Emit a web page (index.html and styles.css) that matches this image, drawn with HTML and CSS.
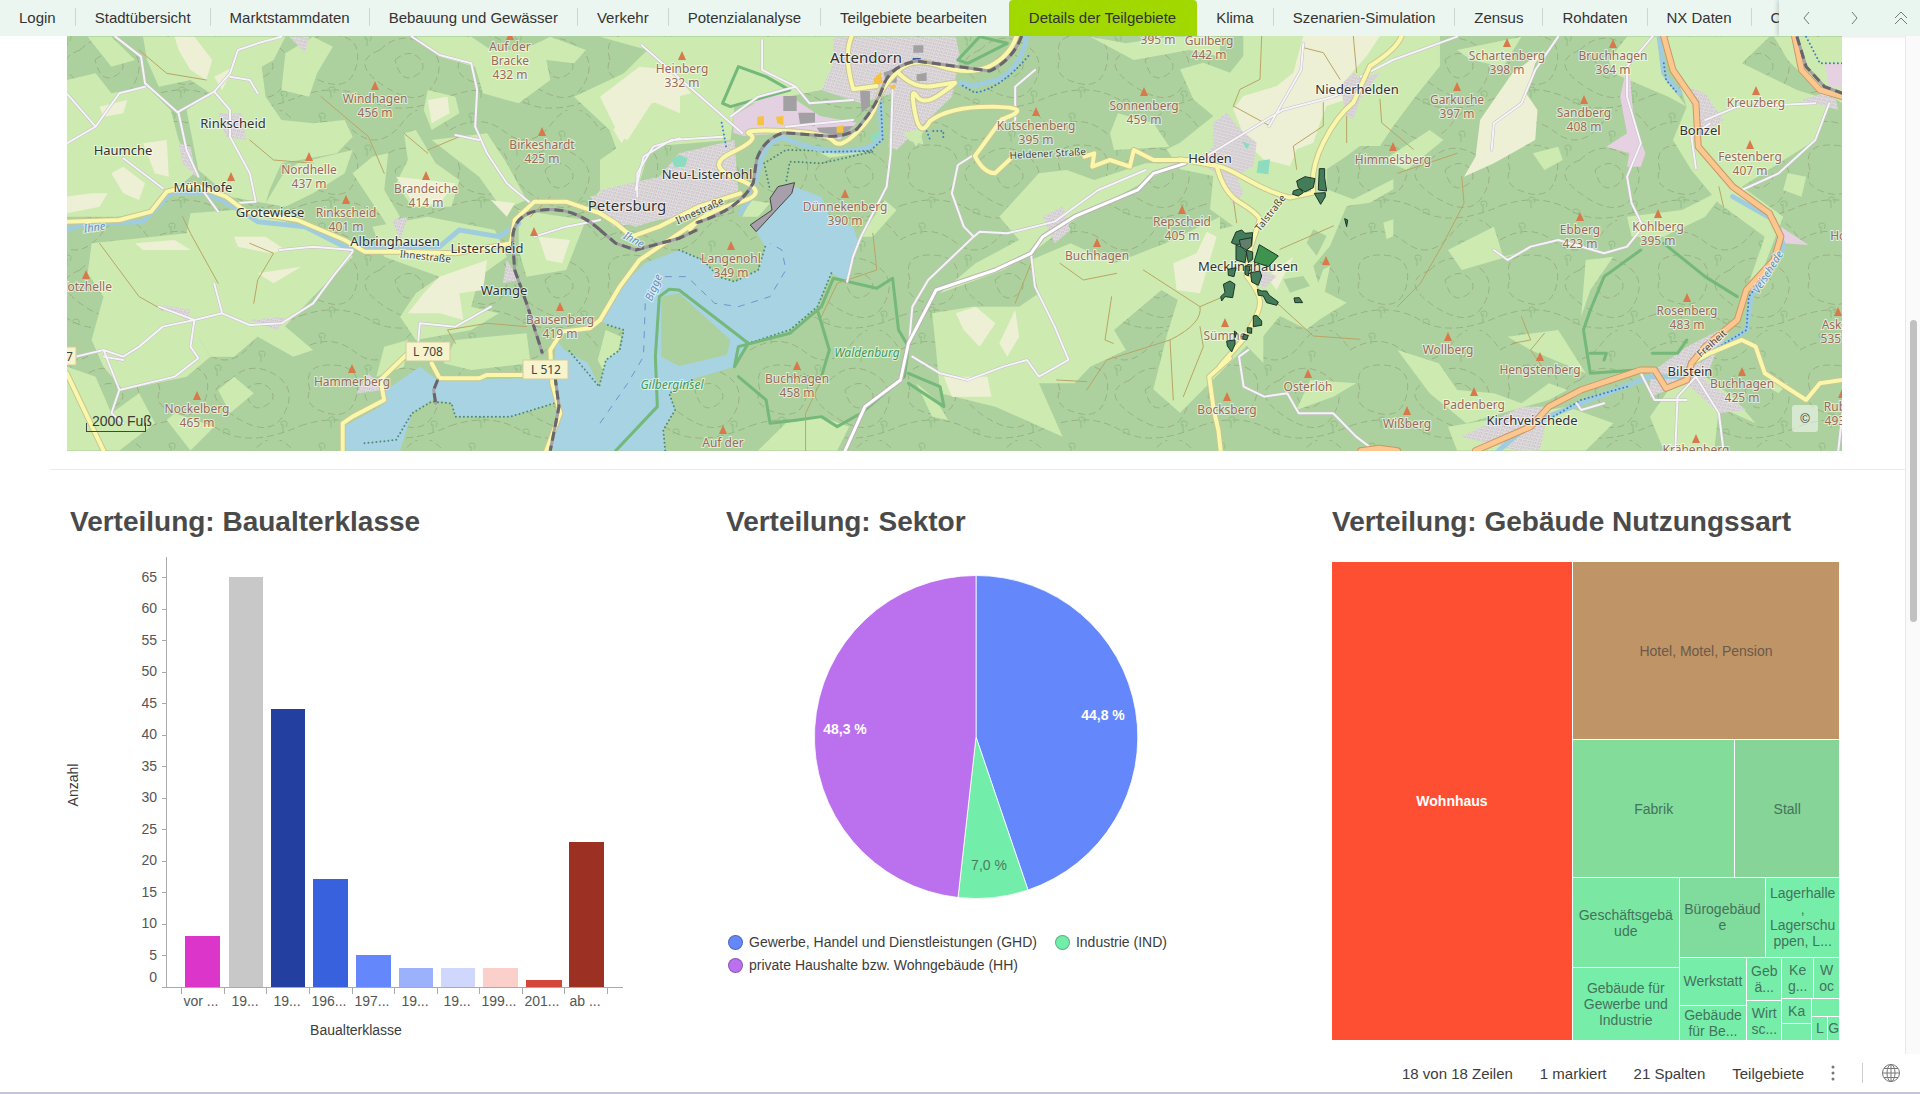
FILE: index.html
```html
<!DOCTYPE html>
<html lang="de">
<head>
    <meta charset="UTF-8">
    <meta name="viewport" content="width=device-width, initial-scale=1.0">
    <title>Details der Teilgebiete</title>
    <link rel="stylesheet" href="styles.css">
</head>
<body>
    <header class="topbar">
        <nav class="tabs">
            <a href="#">Login</a>
            <a href="#">Stadtübersicht</a>
            <a href="#">Marktstammdaten</a>
            <a href="#">Bebauung und Gewässer</a>
            <a href="#">Verkehr</a>
            <a href="#">Potenzialanalyse</a>
            <a href="#">Teilgebiete bearbeiten</a>
            <a href="#" class="active">Details der Teilgebiete</a>
            <a href="#">Klima</a>
            <a href="#">Szenarien-Simulation</a>
            <a href="#">Zensus</a>
            <a href="#">Rohdaten</a>
            <a href="#">NX Daten</a>
            <a href="#">C</a>
        </nav>
        <div class="tab-controls">
            <button type="button" aria-label="Zurück"><svg width="16" height="16"><path d="M10 2 5 8l5 6"/></svg></button>
            <button type="button" aria-label="Weiter"><svg width="16" height="16"><path d="m6 2 5 6-5 6"/></svg></button>
            <button type="button" aria-label="Einklappen"><svg width="16" height="16"><path d="m2 8 6-6 6 6M2 14l6-6 6 6"/></svg></button>
        </div>
    </header>

    <div class="page">
        <main class="content">
            <section class="map">
                <svg viewBox="67 36 1775 415" preserveAspectRatio="xMidYMid slice">
                    <defs>
                        <pattern id="contours" width="150" height="110" patternUnits="userSpaceOnUse">
                            <path class="contour" d="M0 20q30-18 55 2t48-10 47 8M10 60q-8-26 22-25t25 28-30 20-17-23M80 50q20-20 44-6t10 40-50 2-4-36M95 60q14-12 24-2t-4 18-20-16M0 96q40-14 70 4t80-4"/>
                            <path class="tree" d="M20 8q-3-5 2-5t2 6m-3-3v8M110 26q-3-5 2-5t2 6m-3-3v8M66 40q-3-5 2-5t2 6m-3-3v8M30 92q-3-5 2-5t2 6m-3-3v8M132 96q-3-5 2-5t2 6m-3-3v8M74 104q-3-5 2-5t2 6"/>
                        </pattern>
                        <pattern id="houses" width="11" height="10" patternUnits="userSpaceOnUse" patternTransform="rotate(14)">
                            <path d="M0 0h11v10H0z" fill="#dcd8dc"/>
                            <path d="M2 2h3v2H2zM7 3h2v3H7zM2 7h2v2H2zM8 8h3v1H8z" fill="#bbaeae"/>
                            <path d="M0 0h11" stroke="#fafafa"/>
                        </pattern>
                        <path id="peak" d="M-4 4 0-5 4 4z"/>

                        <g id="minor">
                            <g transform="translate(60 30) scale(.3954 .3333)">
                                <path d="M140 20 205 80 215 160 300 250 320 360 350 440M300 245 390 185 430 130 450 60 500 40 560 20M430 140 480 150 500 190M390 185 430 240 430 320 480 430 495 515 440 520M17 340 90 290 150 190 215 170M17 190 90 290M160 385 260 475M360 480 400 545"/>
                                <path d="M740 665 690 740 640 820 560 880 480 885 410 850 340 870 330 950 350 985 290 1040 150 1080 130 1150 160 1180M340 870 260 890 200 950 160 980 110 960 40 980M250 830 340 870M390 760 410 850M110 960 150 1080M160 990 110 980"/>
                                <path d="M890 20 960 75 1040 100 1055 180 1050 290 1080 370 1130 460 1190 520M1000 315 1060 330M905 950 910 880 1000 890 1090 830M555 660 640 650 740 660M1366 570 1280 590 1200 620M1568 325 1500 350 1460 430 1460 500"/>
                            </g>
                            <g transform="translate(600 30) scale(.3954 .3333)">
                                <path d="M740 180 735 370 725 470 660 620 640 680 625 755M945 375 905 405 890 490 920 590 945 620 830 750 790 830 780 960M945 620 960 605 1030 610 1150 575 1260 480 1380 420"/>
                                <path d="M1090 670 1100 770 1150 890 1185 990 1110 1040 1080 990 1020 1010 930 1050 860 1030 790 980M105 45 360 310M410 30 410 120 495 170 530 220 640 210M1050 270 1050 170 1100 120M90 480 110 380 180 330 310 320M495 170 400 200 330 260M470 290 640 270"/>
                            </g>
                            <g transform="translate(1200 30) scale(.4592 .3333)">
                                <path d="M0 390 60 340 180 240 290 200 340 170M150 290 220 120 225 40M350 140 420 90 560 20M780 20 730 120 700 220 640 280 635 360M985 20 930 110 930 200 960 340 930 440 940 520 965 590 930 650 880 670 780 630 720 650 670 690 640 660"/>
                                <path d="M1370 220 1340 330 1260 430 1180 480M1100 270 1170 230 1340 220M105 960 85 980 95 1070 140 1100 190 1090 215 1150 290 1150 340 1220 380 1262M1080 1040 1040 1100 1035 1262M1080 1040 1130 1150 1140 1262M960 1030 990 1110 1060 1110M1399 1150 1390 1262M820 1120 830 1140 880 1120M1080 415 1070 320 1110 280"/>
                            </g>
                        </g>
                        <g id="yellow">
                            <g transform="translate(60 30) scale(.3954 .3333)">
                                <path d="M17 575 150 570 230 545 270 485 340 465 420 500 470 545 600 570 720 630 770 665 860 665 1000 670 1140 640 1150 570 1200 515 1280 515 1366 550"/>
                                <path d="M1366 870 1340 895 1270 905 1240 960 1245 1060 1265 1150 1230 1262M1200 1035 1080 1035 1060 1045 960 1045 940 1000M880 970 810 1050 820 1110 740 1160 715 1180 715 1262M17 1030 110 1262"/>
                            </g>
                            <g transform="translate(700 36) scale(.3333)">
                                <path d="M950 0Q930 60 870 90T720 90 590 110Q540 160 530 200T470 290 400 315 250 285 150 295 95 350 115 430 115 500-30 580"/>
                                <path d="M590 105Q640 160 700 150T765 140 720 175 650 180 645 230 690 255Q750 210 880 212T905 250L825 360Q850 410 885 412L930 370M455 0Q430 60 460 160L530 150"/>
                            </g>
                            <g transform="translate(600 30) scale(.3954 .3333)">
                                <path d="M275 550 150 650 100 690 50 770 0 870M355 490 250 530 150 590 80 620 40 580 0 550M1225 380 1250 370 1245 410 1290 390 1340 410 1350 360 1400 390 1500 390"/>
                            </g>
                            <g transform="translate(1180 36) scale(.3333)">
                                <path d="M665 0Q650 40 570 90L520 200Q470 240 430 320T400 470L330 485Q270 470 200 430T110 390L0 370M110 390Q130 470 180 500T240 550L210 640 200 720Q240 770 240 800T190 910L120 990"/>
                            </g>
                            <g transform="translate(1200 30) scale(.4592 .3333)">
                                <path d="M65 985 20 1040 30 1140 40 1200 45 1262M1070 1000 1110 970 1180 930 1210 950 1230 1030 1320 1110 1350 1060 1399 1050"/>
                            </g>
                        </g>
                        <g id="orange" transform="translate(1200 30) scale(.4592 .3333)">
                            <path d="M1010 20 1030 120 1080 220 1085 350 1160 470 1240 550 1265 620 1250 690 1190 780 1170 870 1100 950 1070 1000 1060 1050 1015 1075 990 1020 960 1020 830 1080 760 1130 720 1190 600 1262M1295 20 1310 120 1350 180 1399 200M350 1262 390 1255 430 1262"/>
                        </g>
                        <path id="county" transform="translate(600 30) scale(.3954 .3333)" d="M620 1262 670 1130 760 1050 780 940 850 780 1000 720 1090 670 1120 620 1200 560 1360 480 1400 430 1480 400"/>
                        <g id="rail">
                            <path transform="translate(60 30) scale(.3954 .3333)" d="M1366 600Q1300 530 1220 540T1145 640L1150 720 1180 820 1220 970M1252 1040 1262 1130 1240 1262M955 1050 945 1080 950 1120"/>
                            <path transform="translate(700 36) scale(.3333)" d="M965 0Q940 70 870 105L650 75Q570 90 550 150T470 280Q430 305 380 300L250 290Q190 310 170 370L160 440Q120 520-10 560"/>
                            <path transform="translate(600 30) scale(.3954 .3333)" d="M245 600 200 625 90 660 40 640 0 600"/>
                            <path transform="translate(1200 30) scale(.4592 .3333)" d="M1300 20 1320 110 1360 170 1399 190"/>
                        </g>
                    </defs>

                    <rect class="forest" x="67" y="36" width="1775" height="415"/>
                    <rect x="67" y="36" width="1775" height="415" fill="url(#contours)"/>

                    <g class="meadow">
                        <g transform="translate(60 30) scale(.3954 .3333)">
                            <path d="M17 150 90 130 130 190 220 170 280 240 300 330 340 430 300 470 230 540 150 560 17 560z"/>
                            <path d="M70 20 130 20 190 90 130 110zM210 20 570 20 540 90 510 110 520 200 560 270 640 280 720 270 740 320 700 370 560 400 530 480 520 520 430 500 350 420 330 300 320 240 380 190 330 150 250 170 220 90z"/>
                            <path d="M570 70 640 20 690 50 650 130 630 200 560 180zM600 400 740 360 720 430 640 490 570 530 520 520 560 440z"/>
                            <path d="M870 310 900 300 950 400 1010 450 990 530 890 530 850 460 880 390zM790 380 830 370 820 480 860 560 830 590 740 430z"/>
                            <path d="M960 20 1040 20 1090 60 1170 60 1240 20 1330 60 1300 100 1230 90 1240 150 1160 220 1070 190 1050 110 960 80 900 20z"/>
                            <path d="M1300 200 1480 100 1568 60 1568 320 1490 360 1450 520 1340 520 1420 400 1390 300z"/>
                            <path d="M930 180 1000 200 1010 250 940 300 920 240zM940 330 1080 310 1130 400 1180 510 1120 540 1060 440z"/>
                            <path d="M80 640 320 610 330 550 440 540 560 570 720 640 740 680 640 800 560 900 430 900 350 920 380 980 320 1040 160 1080 110 1010 80 930 110 800 70 730z"/>
                            <path d="M330 880 420 860 560 880 640 960 590 980 500 920 440 980 380 980zM790 590 930 560 1100 600 1130 680 1060 740 1040 830 1110 850 1040 900 900 930 860 860 900 790 960 740 820 680z"/>
                            <path d="M1160 540 1330 570 1280 720 1180 740 1160 660zM820 950 880 930 870 1010 800 1040zM1000 930 1180 910 1190 1000 1040 1020 970 1000z"/>
                            <path d="M17 1010 90 1040 130 1150 200 1090 240 1180 150 1262 17 1262zM290 1150 390 1190 330 1262 270 1170zM440 1040 490 1090 430 1150 400 1080z"/>
                            <path d="M1380 900 1420 920 1390 1060 1360 990z"/>
                        </g>
                        <g transform="translate(600 30) scale(.3954 .3333)">
                            <path d="M0 20 640 20 620 130 560 180 340 230 330 330 120 350 0 520 0 390 60 340 0 200 120 60z"/>
                            <path d="M380 510 430 520 400 560 360 560zM720 510 750 540 690 620 660 620z"/>
                            <path d="M1110 430 1180 420 1250 450 1380 400 1480 400 1400 440 1200 570 1080 680 1020 720 860 790 950 700 1060 630 1010 560z"/>
                            <path d="M1090 690 1190 640 1300 700 1430 640 1568 560 1568 820 1490 830 1420 780 1300 900 1330 960 1240 1010 1200 1060 1110 1060 1170 1220 1000 1130 860 1090 850 960 840 850 940 830 1060 830 1110 790z"/>
                            <path d="M1310 250 1400 280 1440 350 1300 360 1290 310zM1240 20 1330 40 1440 20 1568 20 1568 80 1490 60 1350 90zM760 280 820 300 800 350zM800 1060 840 1160 880 1170 850 1110zM560 1160 630 1190 600 1262 400 1262 470 1180z"/>
                        </g>
                        <g transform="translate(1180 36) scale(.3333)">
                            <path d="M190 0 780 0 780 90 700 190 640 270 600 330 540 330 500 360 440 400 440 460 520 490 640 430 640 460 570 500 500 510 450 630 400 690 420 760 500 800 420 850 380 880 300 840 250 900 250 980 200 930 0 1130-80 1060-40 900 0 770-30 700 70 590 160 570 90 520 100 420 0 400-40 340 0 320 100 240 40 190 0 100 70 80 150 110 190 60z"/>
                            <path d="M610 560 640 550 640 600 620 610zM430 700 450 690 430 790 400 780z"/>
                            <path class="forest" d="M310 730 370 720 390 750 330 770zM400 580 440 600 410 660 380 620z"/>
                        </g>
                        <g transform="translate(1200 30) scale(.4592 .3333)">
                            <path d="M500 300 530 330 450 420 400 390zM540 660 640 590 660 680 720 660 570 720zM725 370 780 350 790 390 750 420zM930 20 1000 20 1010 140 1060 230 1020 200 900 130 890 90zM560 60 700 20 660 110 590 90z"/>
                            <path d="M1010 20 1240 20 1180 100 1300 180 1370 210 1340 330 1180 470 1270 560 1220 740 1190 780 1230 620 1130 520 1070 420 1030 330 1060 230z"/>
                            <path d="M1150 470 1100 560 1010 620 940 620 930 560 1050 540zM840 690 900 680 850 780 830 860zM670 920 780 900 840 1030 720 960zM430 960 520 1000 560 1080 640 1090 700 1120 760 1060 800 1080 760 1110 580 1180 500 1090zM240 1050 340 1060 290 1100 210 1140z"/>
                            <path d="M1040 1040 980 1160 1010 1262 1120 1262 1130 1130 1210 1180 1160 1100 1100 1040zM540 1190 800 1130 900 1180 840 1262 560 1262zM1280 430 1320 440 1310 500 1270 480zM1210 1050 1280 1060 1260 1090zM1250 20 1399 20 1399 220 1330 160 1280 90z"/>
                        </g>
                    </g>

                    <g class="field">
                        <g transform="translate(60 30) scale(.3954 .3333)">
                            <path d="M290 20 340 20 385 90 370 150 330 120 300 60zM210 340 270 330 275 440 240 430zM390 140 440 110 410 180zM100 230 170 210 160 250 110 260zM130 430 160 410 215 460 200 510 160 490zM17 500 80 490 120 490 100 530 17 550z"/>
                            <path d="M440 620 520 620 570 660 530 670 450 650zM190 640 290 630 330 660 210 660zM960 740 1080 690 1070 780 1010 790 1020 870 960 850 880 850 920 790zM1210 620 1290 630 1270 700 1230 690zM850 440 1000 460 960 520 900 530zM930 210 980 200 985 250 940 280zM1400 300 1450 180 1520 120 1568 190 1568 250 1490 210 1420 340z"/>
                            <path d="M500 730 610 710 540 760zM1090 510 1150 520 1130 560z"/>
                        </g>
                        <g transform="translate(600 30) scale(.3954 .3333)">
                            <path d="M50 320 0 200 100 110 180 120 230 190 130 220 70 330zM900 850 950 830 1000 880 960 950 920 900zM1010 940 1050 840 1060 920 1030 980zM870 1040 980 1040 990 1100 890 1100z"/>
                        </g>
                        <g transform="translate(940 200) scale(.3333)">
                            <path d="M700 190 770 160 800 95 830 110 780 280 710 270zM980 230 1060 170 1010 270z"/>
                        </g>
                        <g transform="translate(1180 36) scale(.3333)">
                            <path d="M370 0 600 0 560 60 490 140 500 190 440 210 420 260 400 320 350 340 330 390 250 370 200 320 160 220 190 180 290 150 340 110z"/>
                        </g>
                        <g transform="translate(1200 30) scale(.4592 .3333)">
                            <path d="M750 60 680 130 610 270 600 380 575 440 640 400 730 330 735 240 710 190 730 100z"/>
                        </g>
                    </g>

                    <path class="mauve" transform="translate(1200 30) scale(.4592 .3333)" d="M930 110 915 200 930 310 885 350 935 370 930 410 960 410 970 370 945 280 935 110zM1265 590 1325 645 1270 640zM1360 100 1399 100 1399 170 1370 170z"/>
                    <g fill="url(#houses)">
                        <g transform="translate(600 30) scale(.3954 .3333)">
                            <path d="M590 20 900 20 910 80 890 200 820 280 750 360 730 350 740 190 660 220 560 180 590 100zM0 480 150 440 200 370 340 330 350 490 250 530 90 590 20 560zM1120 560 1170 530 1190 600 1150 640z"/>
                        </g>
                        <g transform="translate(1180 36) scale(.3333)">
                            <path d="M100 260 140 230 180 280 230 320 220 390 170 420 190 470 160 510 120 420 60 380 100 330zM480 150 520 110 545 130 600 110 540 190 520 250 500 240zM210 690 290 720 250 760z"/>
                        </g>
                        <g transform="translate(1200 30) scale(.4592 .3333)">
                            <path d="M1060 170 1100 190 1140 270 1090 320zM1310 210 1380 180 1390 240zM1060 950 1160 880 1120 980 1100 1050 1190 1140 1130 1150 1060 1060 980 1100 980 1030zM570 1220 700 1130 760 1130 740 1262 690 1262z"/>
                        </g>
                        <g transform="translate(60 30) scale(.3954 .3333)">
                            <path d="M400 250 460 250 470 330 420 320zM300 340 330 350 345 440 310 400zM840 570 880 560 860 630zM1130 690 1160 750 1120 760zM780 1030 820 1080 750 1090zM1340 500 1490 450 1568 470 1568 560 1400 590zM580 20 630 20 620 70zM260 825 330 840 320 870zM480 870 570 860 550 900z"/>
                        </g>
                    </g>
                    <g transform="translate(700 36) scale(.3333)">
                        <path fill="#e3d0e0" d="M100 240 200 180 270 180 360 240 470 260 420 310 270 290 130 300 100 290z"/>
                        <path fill="#a3a0a3" d="M250 180 290 180 290 225 250 225zM295 230 345 230 345 270 300 265zM480 165 510 165 510 210 485 230zM550 110 590 95 590 140 560 140zM650 115 680 110 680 135 650 135zM640 28 670 28 670 50 640 50zM350 275 460 270 430 300 360 290z"/>
                        <path fill="#3558a0" d="M638 66 662 66 662 84 638 84z"/>
                        <path fill="#f5c242" d="M172 242 192 240 192 268 172 268zM228 242 250 240 250 268 232 262zM410 272 430 268 430 290 410 290zM520 130 542 108 548 140 525 150zM568 150 588 145 580 168z"/>
                        <path fill="#8edcc0" d="M510 300 550 280 550 310 520 325z"/>
                        <path class="meadow" d="M610 290 660 280 670 325 630 315zM360 350 520 345 390 365z"/>
                    </g>
                    <path fill="#8edcc0" transform="translate(600 30) scale(.3954 .3333)" d="M180 390 200 375 222 385 215 410 190 412z"/>
                    <path fill="#8edcc0" transform="translate(1180 36) scale(.3333)" d="M235 375 270 370 265 415 230 410zM185 315 210 325 200 340z"/>

                    <!-- Biggesee -->
                    <g class="water">
                        <path transform="translate(60 30) scale(.3954 .3333)" d="M720 1262 715 1190 810 1130 825 1080 910 1010 955 1050 1180 1045 1245 1040 1250 1120 1140 1160 1000 1160 990 1120 940 1110 890 1150 860 1262z"/>
                        <path transform="translate(600 30) scale(.3954 .3333)" d="M-125 1262-102 1150-120 1040-110 930-90 960-30 1000-2 1070 15 990 50 960 60 900 20 885 0 870 50 770 114 700 200 660 260 690 300 740 340 755 400 720 418 650 395 605 490 470 560 500 585 570 640 590 655 640 625 755 585 730 550 830 480 900 375 940 340 1010 240 1045 175 1090 190 1140 160 1200 165 1262z"/>
                    </g>
                    <g transform="translate(600 30) scale(.3954 .3333)">
                        <path class="forest" d="M155 800 200 790 330 930 320 975 200 1008 155 980z"/>
                        <path class="dam" d="M380 585 435 540 430 505 450 470 492 458 485 490 395 605z"/>
                        <path class="ferry" d="M0 1180 70 1060 110 980 115 800 160 740 220 740 290 820 350 830 430 800 470 720 460 660 430 640"/>
                        <path class="dotted" d="M200 660 260 690 300 740 340 755 400 720 418 650M585 730 550 830 480 900 375 940M20 885 60 900 50 960 15 990-2 1070-80 960M165 1262 160 1200 190 1140 175 1090 240 1045M415 400 470 360 690 365 560 400 480 395 470 460M415 400 430 480"/>
                        <path class="reserve" d="M40 1262 145 1130 140 980 150 800 175 778 200 780 375 940 340 1010 350 950 480 910 560 830 590 745 700 775 740 745 755 900 780 950 770 1040 660 1150 600 1190 560 1160 500 1170 430 1180 420 1110 350 1040M550 840 580 960 560 1040 480 1040M780 1030 860 1070 870 1130 780 1060M310 220 350 110 420 140 480 180 330 230zM905 90 960 20 1030 40 930 100z"/>
                    </g>
                    <path class="reserve" transform="translate(1200 30) scale(.4592 .3333)" d="M1010 640 1100 740 1170 800M960 660 880 740 850 840 835 900 850 1030 950 1020M850 970 885 970 880 990M985 970 1040 970 1060 930"/>
                    <path class="dotted" transform="translate(60 30) scale(.3954 .3333)" d="M770 1240 850 1230 890 1150 940 1115 990 1120 1000 1160 1140 1160 1250 1120"/>

                    <g class="river">
                        <path transform="translate(60 30) scale(.3954 .3333)" d="M17 600 70 580 210 575 280 490 370 490 440 530 500 575 620 590 720 650 960 650 1010 600 1110 620 1160 580"/>
                        <path transform="translate(700 36) scale(.3333)" d="M980 0Q970 80 900 130L820 150 780 140M540 190 545 300Q530 340 440 345T250 305Q190 320 180 390L150 490 120 530"/>
                        <path transform="translate(1200 30) scale(.4592 .3333)" d="M1000 20 1010 130 1045 190M1160 500 1250 570 1272 650 1200 800 1190 900 1090 990M1070 1040 980 1040 830 1120 720 1180 650 1262"/>
                    </g>
                    <path class="dotted blue" transform="translate(1200 30) scale(.4592 .3333)" d="M1010 100 1015 150 1040 190M1240 720 1195 800 1190 900 1085 990M930 1070 830 1110 770 1160M1320 20 1350 100 1399 100"/>
                    <path class="dotted blue" transform="translate(700 36) scale(.3333)" d="M985 60Q900 160 825 170L780 145M542 190 548 310 510 345 360 348M65 260 80 340M680 285 690 310M700 285 730 285 730 305"/>

                    <g class="track">
                        <path transform="translate(60 30) scale(.3954 .3333)" d="M370 150 270 130 200 60M480 330 540 390 640 400M660 200 720 260 780 320 820 430M400 760 330 610 310 560M490 820 500 750 540 670 480 640M930 360 1010 320M870 310 910 350 930 370M1190 560 1240 500M100 640 200 800 260 840M1000 940 980 900 1080 880 1180 890"/>
                        <path transform="translate(600 30) scale(.3954 .3333)" d="M690 610 700 720 600 760 560 860M520 1262 520 1150 560 1050M1090 700 1050 820"/>
                        <path transform="translate(940 200) scale(.3333)" d="M610 210 780 320 850 290M780 320Q790 370 690 420L500 480 440 570M350 540 440 545M515 290 495 420 520 430M690 420 700 600M360 190 430 240 530 220M780 380 790 440 730 590"/>
                        <path transform="translate(1180 36) scale(.3333)" d="M370 35 430 50 480 130M520 0 530 110M160 210 270 270M245 0 240 130 180 160 160 210M430 200 430 270 340 330 350 400M170 560 160 490M290 800 400 900 540 910M300 640 460 570M600 190 605 260 700 340M500 320 500 240"/>
                        <path transform="translate(1200 30) scale(.4592 .3333)" d="M570 440 575 520 530 640 480 760 430 830M700 860 720 930 680 940M760 1040 720 960 750 910M430 430 560 370M1130 470 1140 530"/>
                    </g>

                    <use href="#minor" class="casing minor-casing"/>
                    <use href="#minor" class="minor"/>
                    <use href="#county" class="casing county-casing"/>
                    <use href="#county" class="county"/>
                    <use href="#yellow" class="casing yellow-casing"/>
                    <use href="#yellow" class="yellow"/>
                    <use href="#orange" class="casing orange-casing"/>
                    <use href="#orange" class="orange"/>
                    <use href="#rail" class="rail-bed"/>
                    <use href="#rail" class="rail"/>

                    <g class="peaks">
                        <g transform="translate(510 36)"><use href="#peak"/><text y="15">Auf der<tspan x="0" dy="14">Bracke</tspan><tspan x="0" dy="14">432 m</tspan></text></g>
                        <g transform="translate(375 86)"><use href="#peak"/><text y="17">Windhagen<tspan x="0" dy="14">456 m</tspan></text></g>
                        <g transform="translate(309 157)"><use href="#peak"/><text y="17">Nordhelle<tspan x="0" dy="14">437 m</tspan></text></g>
                        <g transform="translate(542 132)"><use href="#peak"/><text y="17">Birkeshardt<tspan x="0" dy="14">425 m</tspan></text></g>
                        <g transform="translate(426 176)"><use href="#peak"/><text y="17">Brandeiche<tspan x="0" dy="14">414 m</tspan></text></g>
                        <g transform="translate(346 200)"><use href="#peak"/><text y="17">Rinkscheid<tspan x="0" dy="14">401 m</tspan></text></g>
                        <g transform="translate(86 275)"><use href="#peak"/><text y="16">Kotzhelle</text></g>
                        <g transform="translate(560 307)"><use href="#peak"/><text y="17">Bausenberg<tspan x="0" dy="14">419 m</tspan></text></g>
                        <g transform="translate(352 369)"><use href="#peak"/><text y="17">Hammerberg</text></g>
                        <g transform="translate(197 396)"><use href="#peak"/><text y="17">Nockelberg<tspan x="0" dy="14">465 m</tspan></text></g>
                        <g transform="translate(231 177)"><use href="#peak"/></g>
                        <g transform="translate(534 232)"><use href="#peak"/></g>
                        <g transform="translate(682 56)"><use href="#peak"/><text y="17">Heinberg<tspan x="0" dy="14">332 m</tspan></text></g>
                        <g transform="translate(1144 92)"><use href="#peak"/><text y="18">Sonnenberg<tspan x="0" dy="14">459 m</tspan></text></g>
                        <g transform="translate(1036 112)"><use href="#peak"/><text y="18">Kutschenberg<tspan x="0" dy="14">395 m</tspan></text></g>
                        <g transform="translate(845 194)"><use href="#peak"/><text y="17">Dünnekenberg<tspan x="0" dy="14">390 m</tspan></text></g>
                        <g transform="translate(731 246)"><use href="#peak"/><text y="17">Langenohl<tspan x="0" dy="14">349 m</tspan></text></g>
                        <g transform="translate(1097 243)"><use href="#peak"/><text y="17">Buchhagen</text></g>
                        <g transform="translate(1182 210)"><use href="#peak"/><text y="16">Repscheid<tspan x="0" dy="14">405 m</tspan></text></g>
                        <g transform="translate(797 366)"><use href="#peak"/><text y="17">Buchhagen<tspan x="0" dy="14">458 m</tspan></text></g>
                        <g transform="translate(723 430)"><use href="#peak"/><text y="17">Auf der</text></g>
                        <g transform="translate(1209 28)"><text y="17">Guilberg<tspan x="0" dy="14">442 m</tspan></text></g>
                        <g transform="translate(1158 28)"><text y="16">395 m</text></g>
                        <g transform="translate(1507 43)"><use href="#peak"/><text y="17">Schartenberg<tspan x="0" dy="14">398 m</tspan></text></g>
                        <g transform="translate(1613 44)"><use href="#peak"/><text y="16">Bruchhagen<tspan x="0" dy="14">364 m</tspan></text></g>
                        <g transform="translate(1457 87)"><use href="#peak"/><text y="17">Garkuche<tspan x="0" dy="14">397 m</tspan></text></g>
                        <g transform="translate(1584 100)"><use href="#peak"/><text y="17">Sandberg<tspan x="0" dy="14">408 m</tspan></text></g>
                        <g transform="translate(1756 91)"><use href="#peak"/><text y="16">Kreuzberg</text></g>
                        <g transform="translate(1393 147)"><use href="#peak"/><text y="17">Himmelsberg</text></g>
                        <g transform="translate(1750 145)"><use href="#peak"/><text y="16">Festenberg<tspan x="0" dy="14">407 m</tspan></text></g>
                        <g transform="translate(1580 217)"><use href="#peak"/><text y="17">Ebberg<tspan x="0" dy="14">423 m</tspan></text></g>
                        <g transform="translate(1658 214)"><use href="#peak"/><text y="17">Kohlberg<tspan x="0" dy="14">395 m</tspan></text></g>
                        <g transform="translate(1687 298)"><use href="#peak"/><text y="17">Rosenberg<tspan x="0" dy="14">483 m</tspan></text></g>
                        <g transform="translate(1448 337)"><use href="#peak"/><text y="17">Wollberg</text></g>
                        <g transform="translate(1540 357)"><use href="#peak"/><text y="17">Hengstenberg</text></g>
                        <g transform="translate(1474 392)"><use href="#peak"/><text y="17">Padenberg</text></g>
                        <g transform="translate(1407 411)"><use href="#peak"/><text y="17">Wißberg</text></g>
                        <g transform="translate(1308 374)"><use href="#peak"/><text y="17">Osterlöh</text></g>
                        <g transform="translate(1225 323)"><use href="#peak"/><text y="17">Sümme</text></g>
                        <g transform="translate(1227 397)"><use href="#peak"/><text y="17">Bocksberg</text></g>
                        <g transform="translate(1742 372)"><use href="#peak"/><text y="16">Buchhagen<tspan x="0" dy="14">425 m</tspan></text></g>
                        <g transform="translate(1696 439)"><use href="#peak"/><text y="15">Krähenberg</text></g>
                        <g transform="translate(1838 312)"><use href="#peak"/><text y="17">Askay<tspan x="0" dy="14">535 m</tspan></text></g>
                        <g transform="translate(1842 394)"><use href="#peak"/><text y="17">Ruben<tspan x="0" dy="14">493 m</tspan></text></g>
                        <g transform="translate(1842 223)"><text y="17">Hoh</text></g>
                        <g transform="translate(1326 261)"><use href="#peak"/></g>
                    </g>

                    <g class="villages">
                        <text x="233" y="128">Rinkscheid</text>
                        <text x="123" y="155">Haumche</text>
                        <text x="203" y="192">Mühlhofe</text>
                        <text x="270" y="217">Grotewiese</text>
                        <text x="395" y="246">Albringhausen</text>
                        <text x="487" y="253">Listerscheid</text>
                        <text x="504" y="295">Wamge</text>
                        <text x="707" y="179">Neu-Listernohl</text>
                        <text x="1210" y="163">Helden</text>
                        <text x="1248" y="271">Mecklinghausen</text>
                        <text x="1357" y="94">Niederhelden</text>
                        <text x="1700" y="135">Bonzel</text>
                        <text x="1532" y="425">Kirchveischede</text>
                        <text x="1690" y="376">Bilstein</text>
                        <text class="town" x="627" y="211">Petersburg</text>
                        <text class="town" x="866" y="63">Attendorn</text>
                    </g>
                    <g class="streets">
                        <text transform="translate(425 260) rotate(6)">Ihnestraße</text>
                        <text transform="translate(701 214) rotate(-24)">Ihnestraße</text>
                        <text transform="translate(1048 157) rotate(-3)">Heldener Straße</text>
                        <text transform="translate(1273 215) rotate(-52)">Talstraße</text>
                        <text transform="translate(1714 346) rotate(-42)">Freiheit</text>
                    </g>
                    <g class="waters">
                        <text transform="translate(95 231) rotate(-8)">Ihne</text>
                        <text transform="translate(632 243) rotate(28)">Ihne</text>
                        <text transform="translate(657 289) rotate(-68)">Bigge</text>
                        <text transform="translate(1771 274) rotate(-58)">Veischede</text>
                    </g>
                    <g class="reserves">
                        <text x="867" y="357">Waldenburg</text>
                        <text x="672" y="389">Gilberginsel</text>
                    </g>
                    <g class="shields">
                        <rect x="406" y="342" width="44" height="19"/><text x="428" y="356">L 708</text>
                        <rect x="523" y="360" width="45" height="19"/><text x="546" y="374">L 512</text>
                        <rect x="60" y="347" width="16" height="18"/><text x="66" y="361">17</text>
                    </g>

                    <!-- Teilgebiete -->
                    <g class="districts" transform="translate(1180 36) scale(.3333)">
                        <path d="M350 435 375 422 405 428 400 455 375 468 355 455zM340 465 360 458 370 470 355 480 338 475zM418 398 434 398 434 425 440 465 415 462zM403 472 436 470 436 482 422 505zM494 548 503 552 500 572zM154 620 168 588 185 582 195 592 218 590 215 625 200 640 190 630 178 625 165 625zM168 628 185 632 200 650 195 680 168 672zM198 642 218 648 218 670 205 680zM144 700 168 695 162 722 145 718zM130 745 150 735 165 745 158 785 135 782 125 795 122 782 135 770zM195 690 210 690 205 720 195 715zM212 710 240 705 245 720 235 748 215 738zM232 760 245 765 260 765 268 778 295 798 290 808 260 800 250 780 235 778zM342 786 358 785 368 800 345 800zM220 840 230 838 245 855 245 868 220 872zM202 875 215 876 215 892 202 890zM190 895 205 898 200 912 188 908zM140 915 165 912 165 925 155 948 142 930zM163 885 170 890 165 905z"/>
                        <path class="built" d="M178 612 215 605 215 630 200 642 182 632z"/>
                        <path class="selected" d="M238 626 295 660 265 692 222 678z"/>
                    </g>
                </svg>
                <div class="scale">2000 Fuß</div>
                <button type="button" class="attribution" aria-label="Quellenangabe">©</button>
            </section>

            <section class="charts">
                <article class="chart">
                    <h2>Verteilung: Baualterklasse</h2>
                    <svg class="bars" viewBox="70 550 656 491">
                        <path class="axis" d="M166.500 558V988.500M162 988.500H623M162 578.500h4M162 610.500h4M162 641.500h4M162 673.500h4M162 704.500h4M162 736.500h4M162 767.500h4M162 799.500h4M162 830.500h4M162 862.500h4M162 893.500h4M162 925.500h4M162 956.500h4"/>
                        <path class="axis" d="M181.500 988v7M224.500 988v7M266.500 988v7M309.500 988v7M352.500 988v7M394.500 988v7M437.500 988v7M479.500 988v7M522.500 988v7M564.500 988v7M607.500 988v7"/>
                        <g class="ylabels">
                            <text x="157" y="583">65</text>
                            <text x="157" y="614">60</text>
                            <text x="157" y="646">55</text>
                            <text x="157" y="677">50</text>
                            <text x="157" y="709">45</text>
                            <text x="157" y="740">40</text>
                            <text x="157" y="772">35</text>
                            <text x="157" y="803">30</text>
                            <text x="157" y="835">25</text>
                            <text x="157" y="866">20</text>
                            <text x="157" y="898">15</text>
                            <text x="157" y="929">10</text>
                            <text x="157" y="961">5</text>
                            <text x="157" y="983">0</text>
                        </g>
                        <rect x="185" y="937" width="35" height="51" fill="#dc35c9"/>
                        <rect x="229" y="578" width="34" height="410" fill="#c8c8c8"/>
                        <rect x="271" y="710" width="34" height="278" fill="#2340a0"/>
                        <rect x="313" y="880" width="35" height="108" fill="#3861dd"/>
                        <rect x="356" y="956" width="35" height="32" fill="#6488fb"/>
                        <rect x="399" y="969" width="34" height="19" fill="#9cb1fb"/>
                        <rect x="441" y="969" width="34" height="19" fill="#cfd8fc"/>
                        <rect x="483" y="969" width="35" height="19" fill="#fbd0cb"/>
                        <rect x="526" y="981" width="36" height="7" fill="#d3483a"/>
                        <rect x="569" y="843" width="35" height="145" fill="#9c3022"/>
                        <g class="xlabels">
                            <text x="201" y="1007">vor ...</text>
                            <text x="245" y="1007">19...</text>
                            <text x="287" y="1007">19...</text>
                            <text x="329" y="1007">196...</text>
                            <text x="372" y="1007">197...</text>
                            <text x="415" y="1007">19...</text>
                            <text x="457" y="1007">19...</text>
                            <text x="499" y="1007">199...</text>
                            <text x="542" y="1007">201...</text>
                            <text x="585" y="1007">ab ...</text>
                        </g>
                        <text class="title" x="356" y="1036">Baualterklasse</text>
                        <text class="title" transform="translate(78 786) rotate(-90)">Anzahl</text>
                    </svg>
                </article>

                <article class="chart">
                    <h2>Verteilung: Sektor</h2>
                    <svg class="pie" viewBox="726 563 606 367">
                        <path fill="#6488fb" d="M976 738V576.500A161.500 161.500 0 0 1 1028 891z"/>
                        <path fill="#73eeaa" d="M976 738 1028 891A161.500 161.500 0 0 1 958 898.500z"/>
                        <path fill="#bb71ee" d="M976 738 958 898.500A161.500 161.500 0 0 1 976 576.500z"/>
                        <text class="light" x="1103" y="721">44,8 %</text>
                        <text class="light" x="845" y="735">48,3 %</text>
                        <text x="989" y="871">7,0 %</text>
                    </svg>
                    <ul class="legend">
                        <li><i class="ghd"></i>Gewerbe, Handel und Dienstleistungen (GHD)</li>
                        <li><i class="ind"></i>Industrie (IND)</li>
                        <li><i class="hh"></i>private Haushalte bzw. Wohngebäude (HH)</li>
                    </ul>
                </article>

                <article class="chart">
                    <h2>Verteilung: Gebäude Nutzungssart</h2>
                    <div class="treemap row">
                        <div class="cell house" style="flex: 240">Wohnhaus</div>
                        <div class="col" style="flex: 266">
                            <div class="cell hotel" style="flex: 177">Hotel, Motel, Pension</div>
                            <div class="row" style="flex: 137">
                                <div class="cell factory" style="flex: 162">Fabrik</div>
                                <div class="cell stable" style="flex: 104">Stall</div>
                            </div>
                            <div class="row" style="flex: 162">
                                <div class="col" style="flex: 106">
                                    <div class="cell shop" style="flex: 89">Geschäftsgebä<br>ude</div>
                                    <div class="cell" style="flex: 72">Gebäude für<br>Gewerbe und<br>Industrie</div>
                                </div>
                                <div class="col" style="flex: 160">
                                    <div class="row" style="flex: 79">
                                        <div class="cell office" style="flex: 86">Bürogebäud<br>e</div>
                                        <div class="cell" style="flex: 73">Lagerhalle<br>,<br>Lagerschu<br>ppen, L...</div>
                                    </div>
                                    <div class="row" style="flex: 83">
                                        <div class="col" style="flex: 67">
                                            <div class="cell" style="flex: 48">Werkstatt</div>
                                            <div class="cell" style="flex: 34">Gebäude<br>für Be...</div>
                                        </div>
                                        <div class="col" style="flex: 34">
                                            <div class="cell" style="flex: 43">Geb<br>ä...</div>
                                            <div class="cell" style="flex: 39">Wirt<br>sc...</div>
                                        </div>
                                        <div class="col" style="flex: 57">
                                            <div class="row" style="flex: 41">
                                                <div class="cell" style="flex: 31">Ke<br>g...</div>
                                                <div class="cell" style="flex: 25">W<br>oc</div>
                                            </div>
                                            <div class="row" style="flex: 41">
                                                <div class="col" style="flex: 29">
                                                    <div class="cell" style="flex: 24">Ka</div>
                                                    <div class="cell" style="flex: 16"></div>
                                                </div>
                                                <div class="col" style="flex: 27">
                                                    <div class="cell" style="flex: 17"></div>
                                                    <div class="row" style="flex: 24">
                                                        <div class="cell" style="flex: 16">L</div>
                                                        <div class="cell" style="flex: 11">G</div>
                                                    </div>
                                                </div>
                                            </div>
                                        </div>
                                    </div>
                                </div>
                            </div>
                        </div>
                    </div>
                </article>
            </section>
        </main>
        <div class="scrollbar"><div class="thumb"></div></div>
    </div>

    <footer class="statusbar">
        <span>18 von 18 Zeilen</span>
        <span>1 markiert</span>
        <span>21 Spalten</span>
        <span>Teilgebiete</span>
        <button type="button" class="more" aria-label="Mehr"><svg width="4" height="16"><circle cx="2" cy="2" r="1.500"/><circle cx="2" cy="8" r="1.500"/><circle cx="2" cy="14" r="1.500"/></svg></button>
        <button type="button" class="globe" aria-label="Sprache"><svg width="20" height="20"><circle cx="10" cy="10" r="8.500"/><ellipse cx="10" cy="10" rx="4" ry="8.500"/><path d="M10 1.500v17M1.500 10h17M3 5.500h14M3 14.500h14"/></svg></button>
    </footer>
</body>
</html>
```
FILE: styles.css
```css
body, html {
    margin: 0;
    padding: 0;
    height: 100%;
}
body {
    display: flex;
    flex-direction: column;
    font-family: "Liberation Sans", Arial, sans-serif;
    font-size: 15px;
    color: #3c3c3c;
    background: #fff;
    overflow: hidden;
}
button {
    padding: 0;
    border: none;
    background: none;
    font: inherit;
    color: inherit;
    cursor: pointer;
}

/* tabs */
.topbar {
    display: flex;
    flex: none;
    height: 36px;
    background: #ebf6f1;
}
.tabs {
    display: flex;
    flex: 1;
    min-width: 0;
    overflow: hidden;
}
.tabs a {
    position: relative;
    flex: none;
    padding: 0 20px 0 19px;
    line-height: 36px;
    color: #333;
    text-decoration: none;
    white-space: nowrap;
}
.tabs a::after {
    content: "";
    position: absolute;
    right: 0;
    top: 8px;
    width: 1px;
    height: 18px;
    background: #cdd6d2;
}
.tabs a:nth-child(7) {
    padding-right: 22px;
}
.tabs .active {
    padding: 0 21px 0 20px;
    background: #a1d800;
    border-radius: 4px 4px 0 0;
}
.tabs .active::after,
.tabs a:nth-child(7)::after {
    display: none;
}
.tab-controls {
    display: flex;
    flex: none;
    align-items: center;
    justify-content: space-between;
    width: 110px;
    padding: 0 11px 0 20px;
    background: #e9f5ef;
    box-shadow: -2px 0 4px rgba(0,0,0,0.15);
}
.tab-controls svg {
    display: block;
    fill: none;
    stroke: #777;
}

/* page */
.page {
    display: flex;
    flex: 1;
    min-height: 0;
}
.content {
    flex: 1;
    min-width: 0;
    overflow: hidden;
}
.scrollbar {
    flex: none;
    width: 14px;
    border-left: 1px solid #e8e8e8;
    background: #fafafa;
}
.thumb {
    width: 7px;
    height: 302px;
    margin: 284px 0 0 4px;
    border-radius: 4px;
    background: #c1c1c1;
}

/* map */
.map {
    position: relative;
    height: 415px;
    margin: 0 63px 0 67px;
}
.map > svg {
    display: block;
    width: 100%;
    height: 100%;
}
.map path {
    vector-effect: non-scaling-stroke;
}
.map text {
    font-family: "Noto Sans", sans-serif;
    text-anchor: middle;
    paint-order: stroke;
    stroke: rgba(255,255,255,0.6);
    stroke-width: 2px;
}
.forest { fill: #add19e; }
.meadow { fill: #cdebb0; }
.field { fill: #eef0d5; }
.mauve { fill: #e6d1e3; }
.water { fill: #a8d3e2; }
.dam { fill: #a79fa9; stroke: #444; }
.contour {
    fill: none;
    stroke: #99b082;
    stroke-dasharray: 7 4;
}
.tree {
    fill: none;
    stroke: #8fbd85;
}
.river, .track, .rail, .rail-bed, .reserve, .ferry, .dotted, .casing, .minor, .county, .yellow, .orange {
    fill: none;
    stroke-linejoin: round;
    stroke-linecap: round;
}
.river { stroke: #a0cddd; stroke-width: 5px; }
.track { stroke: #b9a565; stroke-width: 1px; }
.ferry { stroke: #6f93d0; stroke-dasharray: 7 7; stroke-linecap: butt; }
.dotted { stroke: #4e8a7c; stroke-width: 2px; stroke-dasharray: 0 4; }
.blue { stroke: #3d7cc0; }
.reserve { stroke: #74b87a; stroke-width: 3px; }
.casing { stroke: #b9b3b5; }
.minor-casing { stroke: #c4bec6; stroke-width: 3px; }
.minor { stroke: #f6f4f8; stroke-width: 2px; }
.county-casing { stroke-width: 5px; }
.county { stroke: #fff; stroke-width: 3px; }
.yellow-casing { stroke: #c9c596; stroke-width: 6px; }
.yellow { stroke: #f9f8aa; stroke-width: 4px; }
.orange-casing { stroke: #c99868; stroke-width: 7px; }
.orange { stroke: #fbc78f; stroke-width: 5px; }
.rail-bed { stroke: #a3a1a6; stroke-width: 3px; }
.rail { stroke: #68666b; stroke-width: 3px; stroke-dasharray: 9 5; stroke-linecap: butt; }
.districts { fill: #33704f; fill-opacity: 0.9; stroke: #1d3328; stroke-width: 1px; }
.built { fill: #66806f; }
.selected { fill: #2f8a45; }
.peaks { font-size: 12px; fill: #9b6a55; }
.peaks use { fill: #d9784a; }
.villages { font-size: 13px; fill: #333; }
.villages .town { font-size: 15px; }
.streets { font-size: 10px; fill: #4b4530; }
.waters { font-size: 11px; font-style: italic; fill: #5f91c4; }
.reserves { font-size: 12px; font-style: italic; fill: #3f9a55; }
.shields { font-size: 12px; fill: #444; }
.shields rect { fill: #f7f3cc; stroke: #d3cc9c; }
.map .shields text { stroke: none; }
.scale {
    position: absolute;
    left: 19px;
    bottom: 19px;
    display: flex;
    align-items: flex-end;
    box-sizing: border-box;
    width: 60px;
    height: 9px;
    padding: 0 0 2px 5px;
    border: 1px solid #444;
    border-top: none;
    font-size: 14px;
    line-height: 16px;
    white-space: nowrap;
}
.attribution {
    position: absolute;
    right: 24px;
    bottom: 19px;
    width: 26px;
    height: 27px;
    border-radius: 3px;
    background: rgba(255,255,255,0.5);
    font-size: 13px;
}

/* charts */
.charts {
    display: grid;
    grid-template-columns: 656fr 606fr 507fr;
    margin: 18px 0 0 50px;
    padding: 34px 66px 0 20px;
    border-top: 1px solid #ececec;
}
.chart {
    min-width: 0;
}
.chart h2 {
    margin: 0;
    font-size: 28px;
    line-height: 36px;
    color: #4a4a4a;
    white-space: nowrap;
}
.chart svg {
    display: block;
    width: 100%;
    font-size: 14px;
    fill: #555;
    overflow: visible;
}
.bars {
    margin-top: 9px;
}
.axis {
    fill: none;
    stroke: #aaa;
}
.ylabels {
    text-anchor: end;
}
.xlabels, .title {
    text-anchor: middle;
}
.title {
    fill: #3c3c3c;
}
.pie {
    margin-top: 22px;
}
.pie path {
    stroke: #fff;
    stroke-opacity: 0.8;
}
.pie text {
    text-anchor: middle;
    fill: #4c7a60;
}
.pie .light {
    fill: #fff;
    font-weight: bold;
}
.legend {
    display: flex;
    flex-wrap: wrap;
    gap: 7px 18px;
    margin: 5px 0 0 2px;
    padding: 0;
    list-style: none;
    font-size: 14px;
    line-height: 16px;
}
.legend li {
    display: flex;
    align-items: center;
    gap: 6px;
}
.legend i {
    width: 15px;
    height: 15px;
    box-sizing: border-box;
    border: 1px solid rgba(0,0,0,0.25);
    border-radius: 50%;
}
.ghd { background: #6488fb; }
.ind { background: #73eeaa; }
.hh { background: #bb71ee; }

/* treemap */
.row, .col {
    display: flex;
    gap: 1px;
    min-width: 0;
    min-height: 0;
}
.col {
    flex-direction: column;
}
.treemap {
    height: 478px;
    margin-top: 22px;
}
.cell {
    display: flex;
    align-items: center;
    justify-content: center;
    min-width: 0;
    min-height: 0;
    overflow: hidden;
    background: #76eeaa;
    color: #44735b;
    font-size: 14px;
    line-height: 16px;
    text-align: center;
    white-space: nowrap;
}
.house { background: #ff4f33; color: #fff; font-weight: bold; }
.hotel { background: #bf9467; color: #6b5a48; }
.factory { background: #83dc99; }
.stable { background: #86d497; }
.shop { background: #7ae7a3; }
.office { background: #80dc9d; }

/* status bar */
.statusbar {
    display: flex;
    flex: none;
    align-items: center;
    justify-content: flex-end;
    gap: 27px;
    height: 38px;
    padding-right: 19px;
    border-bottom: 2px solid #c3c5d6;
}
.statusbar svg {
    display: block;
}
.more {
    fill: #777;
}
.globe {
    padding-left: 18px;
    border-left: 1px solid #ccc;
    fill: none;
    stroke: #777;
}
```
